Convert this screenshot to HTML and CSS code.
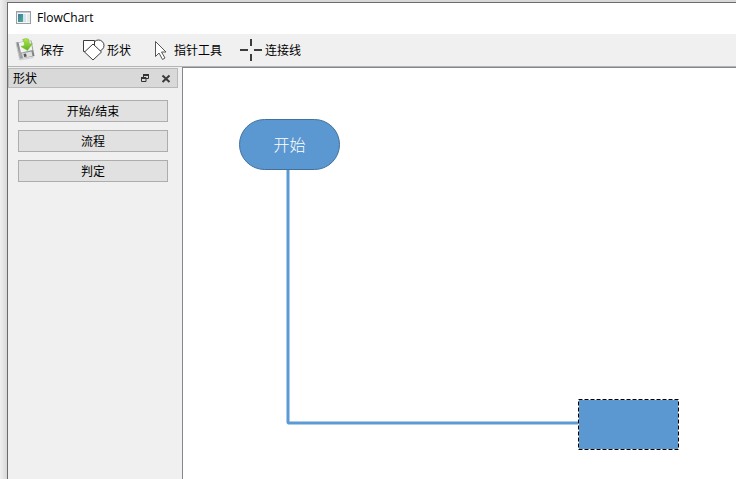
FILE: index.html
```html
<!DOCTYPE html>
<html lang="zh-CN">
<head>
<meta charset="utf-8">
<title>FlowChart</title>
<link rel="stylesheet" href="styles.css">
</head>
<body>
<div class="window">
  <header class="titlebar">
    <svg class="app-icon" width="16" height="16" viewBox="0 0 16 16" aria-hidden="true">
      <defs>
        <linearGradient id="app" x1="0" y1="0" x2="1" y2="1">
          <stop offset="0" stop-color="#3f78b4"/><stop offset="1" stop-color="#4fae7c"/>
        </linearGradient>
      </defs>
      <rect x=".5" y="1.5" width="14" height="12" fill="#f4f6f8" stroke="#9a9fa4"/>
      <path d="M1 2.5h13" stroke="#c5c9cd"/>
      <rect x="2" y="4" width="5" height="8" fill="url(#app)"/>
      <rect x="7" y="4" width="3" height="8" fill="#d3e4ee"/>
      <rect x="11" y="4" width="3" height="8" fill="#e3e9ed"/>
    </svg>
    <h1 class="title">FlowChart</h1>
  </header>

  <nav class="toolbar">
    <button class="tool" type="button">
      <svg width="24" height="24" viewBox="0 0 24 24" aria-hidden="true">
        <defs>
          <linearGradient id="disk" x1="0" y1="0" x2="1" y2="1">
            <stop offset="0" stop-color="#77797b"/><stop offset=".5" stop-color="#a6a8aa"/><stop offset="1" stop-color="#6c6e70"/>
          </linearGradient>
          <linearGradient id="arrow" x1="0" y1="0" x2="0" y2="1">
            <stop offset="0" stop-color="#b2e64c"/><stop offset="1" stop-color="#5cb41c"/>
          </linearGradient>
        </defs>
        <path d="M4 21.500L19 19 20 20 6 22.500z" fill="#d2d2d2"/>
        <path d="M2 4.500L17.500 2.500 20.500 18 5.500 21z" fill="url(#disk)"/>
        <path d="M2 4.500L5.500 21" stroke="#c9cbcc"/>
        <path d="M4.500 4.500L16.500 3 18.500 12 7 14.500z" fill="#f3f3f1"/>
        <path d="M8 15.500L17.500 13.500 18.500 18 9 20z" fill="#e0e1e1"/>
        <path d="M9.500 16L12 15.500 12.800 18.500 10.200 19z" fill="#55585a"/>
        <path d="M8.500 1.500Q11 0 14.500 1L15.500 6 18.500 5.500 13.500 12.500 7 8.500 10.500 7.500Q10.800 4 8.500 1.500z" fill="url(#arrow)" stroke="#75b936" stroke-width=".5"/>
      </svg>
      <span>保存</span>
    </button>
    <button class="tool" type="button">
      <svg width="24" height="24" viewBox="0 0 24 24" fill="#fff" stroke="#3c3c3c" aria-hidden="true">
        <circle cx="17.500" cy="7.500" r="5.500"/>
        <path d="M2.500 2.500h11v11h-11z"/>
        <path d="M12 6l8.500 8-8.500 8-8.500-8z"/>
      </svg>
      <span>形状</span>
    </button>
    <button class="tool" type="button">
      <svg width="24" height="24" viewBox="0 0 24 24" fill="#fff" stroke="#555" aria-hidden="true">
        <path d="M7.500 3.500v15l3.500-3.500 3.500 6.500 2.500-1.500-3.500-6h4.500z"/>
      </svg>
      <span>指针工具</span>
    </button>
    <button class="tool" type="button">
      <svg width="24" height="24" viewBox="0 0 24 24" stroke="#3c3c3c" stroke-width="2" aria-hidden="true">
        <path d="M12 1v7M12 16v7"/>
        <path d="M1 12h8M15 12h8"/>
      </svg>
      <span>连接线</span>
    </button>
  </nav>

  <main class="workspace">
    <aside class="dock">
      <div class="dock-head">
        <h2 class="dock-title">形状</h2>
        <button class="dock-button" type="button" aria-label="浮动">
          <svg width="10" height="10" viewBox="0 0 10 10" fill="none" stroke="#333" aria-hidden="true">
            <path d="M3.500 4V1.500h5v4H6"/><path d="M3 2h6" stroke-width="2"/>
            <path d="M1.500 4.500h4.500v4H1.500z"/><path d="M1 5h5" stroke-width="2"/>
          </svg>
        </button>
        <button class="dock-button" type="button" aria-label="关闭">
          <svg width="10" height="10" viewBox="0 0 10 10" stroke="#3a3a3a" stroke-width="2" aria-hidden="true">
            <path d="M1.500 2.500l7 6.500M8.500 2.500l-7 6.500"/>
          </svg>
        </button>
      </div>
      <div class="palette">
        <button class="palette-button" type="button">开始/结束</button>
        <button class="palette-button" type="button">流程</button>
        <button class="palette-button" type="button">判定</button>
      </div>
    </aside>

    <section class="canvas">
      <svg class="links" width="500" height="390" viewBox="0 0 500 390" fill="none" aria-hidden="true">
        <path d="M105 100V355H396" stroke="#5b9bd5" stroke-width="3" stroke-linejoin="bevel"/>
      </svg>
      <div class="node node-start">开始</div>
      <svg class="node-process" width="101" height="51" viewBox="0 0 101 51" aria-hidden="true">
        <rect x=".5" y=".5" width="100" height="50" fill="#5b98d1" stroke="#fff"/>
        <rect x=".5" y=".5" width="100" height="50" fill="none" stroke="#000" stroke-dasharray="4 2"/>
      </svg>
    </section>
  </main>
</div>
</body>
</html>
```

FILE: styles.css
```css
* {
  box-sizing: border-box;
}

body {
  margin: 0;
  padding: 2px 0 0 7px;
  background: linear-gradient(to right, #f0f0f0, #d8d8d8 7px);
  color: #000;
  font: 12px/18px "Open Sans", "Noto Sans CJK SC", sans-serif;
  overflow: hidden;
}

.window {
  display: flex;
  flex-direction: column;
  height: calc(100vh - 2px);
  border-top: 1px solid #6b6b6b;
  border-left: 1px solid #6b6b6b;
  background: #f0f0f0;
}

button {
  padding: 0;
  border: 0;
  background: none;
  color: inherit;
  font: inherit;
}

svg {
  display: block;
  flex: none;
}

.titlebar {
  display: flex;
  align-items: center;
  gap: 5px;
  height: 31px;
  padding: 0 8px 2px;
  background: #fff;
}

.title,
.dock-title {
  margin: 0;
  font-size: 12px;
  font-weight: 400;
}

.toolbar {
  display: flex;
  align-items: center;
  gap: 17px;
  height: 33px;
  padding: 0 6px;
  border-bottom: 1px solid #b4b4b4;
}

.tool {
  display: flex;
  align-items: center;
  gap: 2px;
}

.tool span {
  padding-top: 2px;
}

.workspace {
  display: flex;
  flex: 1;
  min-height: 0;
}

.dock {
  width: 170px;
  margin-right: 4px;
  padding-top: 1px;
}

.dock-head {
  display: flex;
  align-items: center;
  gap: 11px;
  height: 20px;
  padding: 0 6px 0 4px;
  border: 1px solid #b9b9b9;
  background: #d9d9d9;
}

.dock-title {
  flex: 1;
  padding-top: 2px;
}

.palette {
  display: flex;
  flex-direction: column;
  gap: 8px;
  padding: 12px 10px;
}

.palette-button {
  height: 22px;
  padding-top: 2px;
  border: 1px solid #adadad;
  background: #e1e1e1;
}

.canvas {
  position: relative;
  flex: 1;
  border-top: 1px solid #828790;
  border-left: 1px solid #828790;
  background: #fff;
  overflow: hidden;
}

.links {
  position: absolute;
  top: 0;
  left: 0;
}

.node {
  position: absolute;
  display: flex;
  align-items: center;
  justify-content: center;
  width: 101px;
  height: 51px;
  background: #5b98d1;
  color: #fff;
  font-size: 16px;
  font-weight: 300;
}

.node-start {
  top: 51px;
  left: 56px;
  border: 1px solid #41719c;
  border-radius: 26px;
}

.node-process {
  position: absolute;
  top: 331px;
  left: 395px;
}
```
